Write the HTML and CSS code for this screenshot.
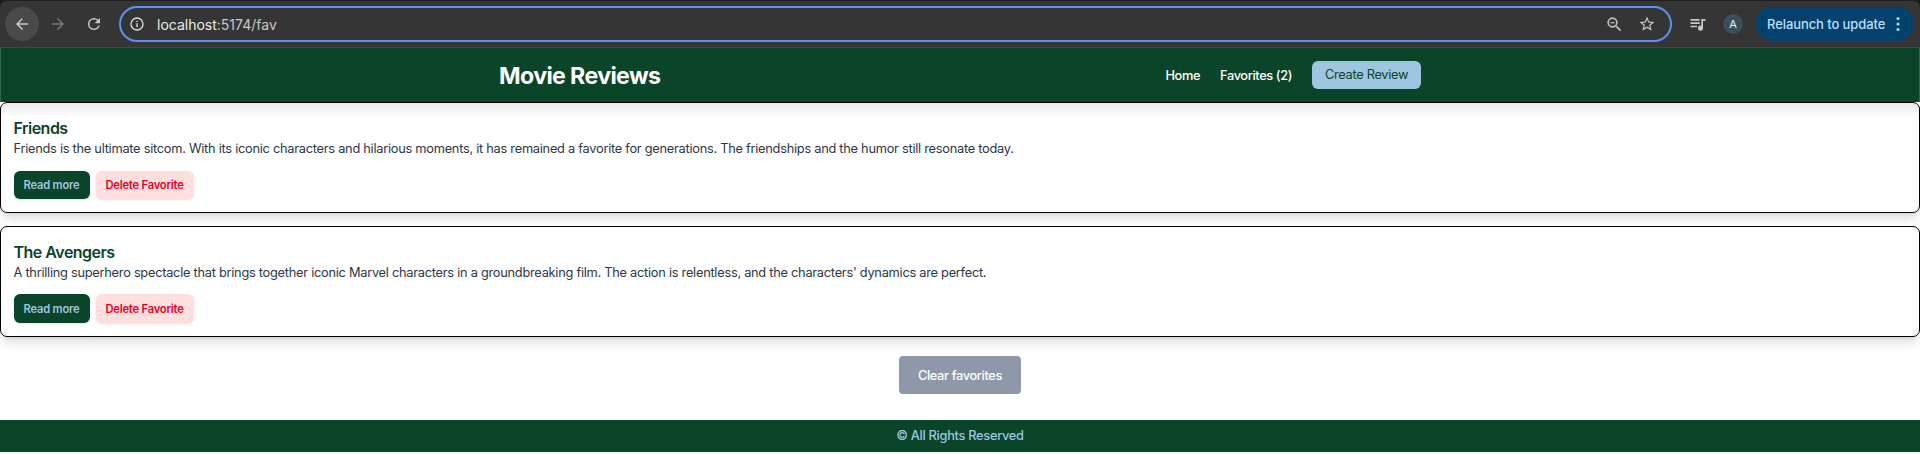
FILE: index.html
```html
<!DOCTYPE html>
<html lang="en">
<head>
<meta charset="utf-8">
<title>Movie Reviews</title>
<link rel="stylesheet" href="styles.css">
</head>
<body>
<div class="chrome"><div class="toolbar">
  <span class="nav-btn nav-back"><svg width="18" height="18" viewBox="0 0 24 24" fill="#c7c7c7"><path d="M20 11H7.830l4.880-4.880L12 4l-8 8 8 8 1.410-1.410L7.830 13H20z"/></svg></span>
  <span class="nav-btn"><svg width="18" height="18" viewBox="0 0 24 24" fill="#777"><path d="M4 11h12.170l-5.590-5.590L12 4l8 8-8 8-1.410-1.410L16.170 13H4z"/></svg></span>
  <span class="nav-btn"><svg width="18" height="18" viewBox="0 0 24 24" fill="#c7c7c7"><path d="M17.650 6.350A7.960 7.960 0 0 0 12 4a8 8 0 1 0 7.730 10h-2.080A6 6 0 1 1 12 6c1.660 0 3.140.69 4.220 1.780L13 11h7V4z"/></svg></span>
  <div class="omnibox">
    <svg width="16" height="16" viewBox="0 0 24 24" fill="#dcdcdc"><path d="M11 7h2v2h-2zm0 4h2v6h-2zm1-9a10 10 0 1 0 0 20 10 10 0 0 0 0-20zm0 18a8 8 0 1 1 0-16 8 8 0 0 1 0 16z"/></svg>
    <span class="url"><b class="host">localhost</b>:5174/fav</span>
    <svg class="search" width="19" height="19" viewBox="0 0 24 24" fill="#c0c0c0"><path d="M15.500 14h-.79l-.28-.27A6.500 6.500 0 1 0 13.730 14.430l.27.28v.79l5 4.990L20.490 19zm-6 0a4.500 4.500 0 1 1 0-9 4.500 4.500 0 0 1 0 9zM7 8.700h5v1.600H7z"/></svg>
    <svg width="18" height="18" viewBox="0 0 24 24" fill="#c7c7c7"><path d="M22 9.240l-7.190-.62L12 2 9.190 8.630 2 9.240l5.460 4.730L5.820 21 12 17.270 18.180 21l-1.630-7.030zM12 15.400l-3.760 2.270 1-4.280-3.320-2.880 4.380-.38L12 6.100l1.710 4.040 4.380.38-3.320 2.880 1 4.280z"/></svg>
  </div>
  <svg class="queue" width="20" height="20" viewBox="0 0 24 24" fill="#c7c7c7"><path d="M14 6H3v2h11zm0 4H3v2h11zM3 16h8v-2H3zM16 6v8.180A3 3 0 1 0 18 17V8h3V6z"/></svg>
  <span class="avatar">A</span>
  <div class="relaunch"><span class="relaunch-text">Relaunch to update</span><svg width="4" height="16" viewBox="0 0 4 16" fill="#a8d4fb"><circle cx="2" cy="2.500" r="1.600"/><circle cx="2" cy="8" r="1.600"/><circle cx="2" cy="13.500" r="1.600"/></svg></div>
</div></div>
<header class="header">
  <h1 class="brand">Movie Reviews</h1>
  <nav class="links">
    <a class="home">Home</a>
    <a class="favs">Favorites (2)</a>
    <a class="create">Create Review</a>
  </nav>
</header>
<main class="list">
  <article class="card">
    <h2 class="card-title">Friends</h2>
    <p class="card-text">Friends is the ultimate sitcom. With its iconic characters and hilarious moments, it has remained a favorite for generations. The friendships and the humor still resonate today.</p>
    <div class="actions"><button class="btn read">Read more</button><button class="btn delete">Delete Favorite</button></div>
  </article>
  <article class="card">
    <h2 class="card-title">The Avengers</h2>
    <p class="card-text">A thrilling superhero spectacle that brings together iconic Marvel characters in a groundbreaking film. The action is relentless, and the characters' dynamics are perfect.</p>
    <div class="actions"><button class="btn read">Read more</button><button class="btn delete">Delete Favorite</button></div>
  </article>
  <button class="clear">Clear favorites</button>
</main>
<footer class="footer"><span>© All Rights Reserved</span></footer>
</body>
</html>
```
FILE: styles.css
```css
* { box-sizing: border-box; margin: 0; }
body { font-family: Inter, "Liberation Sans", sans-serif; background: #fff; height: 454px; overflow: hidden; white-space: nowrap; }
svg { display: block; flex: none; }
button { font-family: inherit; border: 0; padding: 0; }

.chrome { background: #1f1f1f; padding-top: 1px; }
.toolbar { height: 47px; background: #353535; border-bottom: 1px solid #454545; border-radius: 7px 7px 0 0; display: flex; align-items: center; padding: 0 6px 0 5px; }
.nav-btn { width: 34px; height: 34px; border-radius: 50%; display: flex; align-items: center; justify-content: center; margin-right: 2px; flex: none; }
.nav-back { background: #4a4a4a; }
.omnibox { width: 1553px; flex: none; height: 36px; margin-left: 6px; border: 2px solid #5b93f0; border-radius: 18px; display: flex; align-items: center; padding: 0 14px 0 8px; }
.url { margin-left: 12px; font-size: 14px; color: #c7c7c7; }
.host { font-weight: 400; color: #ececec; }
.search { margin-left: auto; margin-right: 14px; }
.queue { margin-left: 16px; }
.avatar { width: 20px; height: 20px; margin-left: 15px; border-radius: 50%; background: #3b4f5a; color: #e4eef3; font-size: 11px; line-height: 20px; text-align: center; }
.relaunch { width: 159px; height: 34px; margin-left: 12px; border-radius: 17px; background: #04416d; color: #b9dffc; display: flex; align-items: center; justify-content: space-between; padding: 0 14px 0 12px; font-size: 13px; font-weight: 500; letter-spacing: -.08px; }

.header { height: 54px; background: #0a4429; border: solid #35664f; border-width: 0 1px; display: flex; align-items: center; justify-content: space-between; padding: 0 498px; }
.brand { padding-top: 1px; font-size: 23.200px; font-weight: 700; letter-spacing: -.63px; color: #fff; }
.links { display: flex; align-items: center; font-size: 12.800px; font-weight: 500; letter-spacing: -.38px; color: #fff; }
.home, .favs { padding-top: 1px; }
.favs { margin-left: 20px; }
.create { width: 109px; height: 28px; margin-left: 20px; border-radius: 6px; background: #9ec6e0; color: #0a4429; font-weight: 400; letter-spacing: -.3px; line-height: 27px; text-align: center; }

.list { height: 318px; display: flex; flex-direction: column; }
.card { height: 111px; margin-bottom: 13px; padding: 15px 13px 0 12.500px; border: 1px solid #000; border-radius: 7px; box-shadow: 0 8px 12px -2px rgba(0, 0, 0, .12), 0 3px 5px -3px rgba(0, 0, 0, .12); }
.card:first-child { background: linear-gradient(#ececec, #fff 16px); }
.card-title { font-size: 16px; line-height: 20px; font-weight: 600; letter-spacing: -.52px; color: #0a4429; }
.card-text { font-size: 12.800px; line-height: 22px; letter-spacing: -.262px; color: #2d3748; }
.actions { display: flex; gap: 6px; margin-top: 11px; }
.btn { height: 28px; border-radius: 6px; font-size: 11.200px; font-weight: 600; letter-spacing: -.2px; box-shadow: 0 1px 2px rgba(0, 0, 0, .12); }
.card + .card .card-text { line-height: 21px; }
.card + .card .btn { height: 29px; }
.read { width: 76px; background: #0a4429; color: #9ec6e0; }
.delete { width: 98px; background: #ffdede; color: #e6001f; }
.clear { width: 122px; height: 38px; margin: 6px auto 0; border-radius: 4px; background: #8f98a8; color: #fff; font-size: 12.800px; font-weight: 500; letter-spacing: -.35px; }
.footer { height: 32px; background: #0a4429; color: #9ec6e0; font-size: 12.800px; font-weight: 500; letter-spacing: -.29px; line-height: 31px; text-align: center; }
```
